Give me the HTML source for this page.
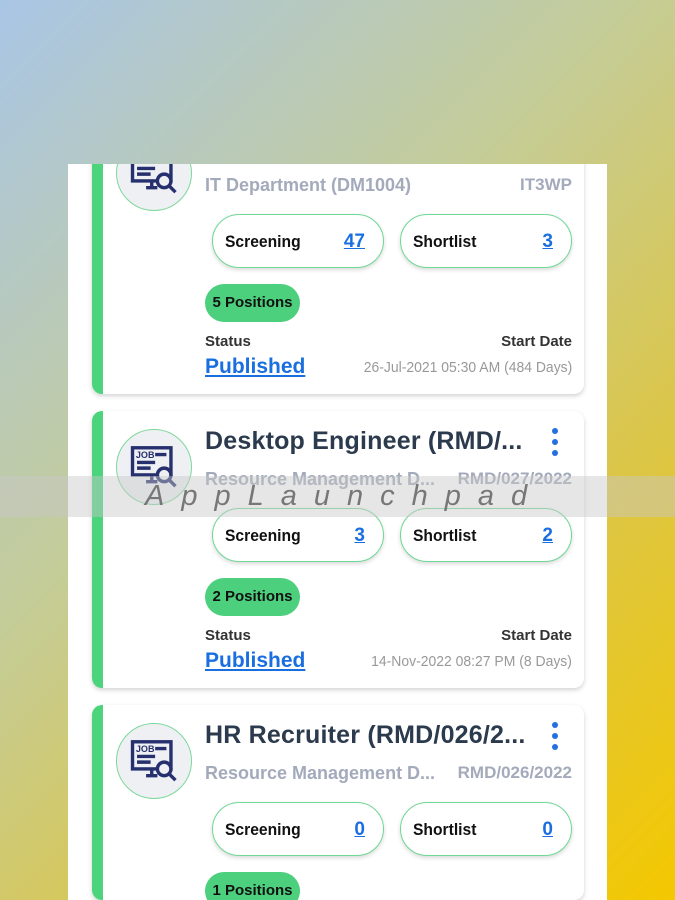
<!DOCTYPE html>
<html><head><meta charset="utf-8"><style>
*{margin:0;padding:0;box-sizing:border-box}
html,body{width:675px;height:900px;overflow:hidden}
body{position:relative;font-family:"Liberation Sans",sans-serif;
background:linear-gradient(135deg,#a9c6e6 0%,#c4cc98 40%,#dcc646 70%,#f4c800 100%);}
.panel{position:absolute;left:68px;top:164px;width:539px;height:736px;background:#fff;overflow:hidden}
.card{position:absolute;left:24px;width:492px;height:277px;background:#fff;border-radius:10px;box-shadow:0 2px 5px rgba(0,0,0,.18);overflow:hidden}
.bar{position:absolute;left:0;top:0;bottom:0;width:11px;background:#4cd47c}
.ic{position:absolute;left:24px;top:18px;width:76px;height:76px;border-radius:50%;background:#eef0f4;border:1.5px solid #7cd89a}
.ic svg{position:absolute;left:11px;top:11px}
.title{position:absolute;left:113px;top:16px;font-size:25px;font-weight:bold;color:#2c3a4e;white-space:nowrap;letter-spacing:.2px}
.dots{position:absolute;left:460px;top:17px;width:8px}
.dots i{display:block;width:6px;height:6px;border-radius:50%;background:#2470e0;margin-bottom:5px}
.sub{position:absolute;left:113px;top:58px;font-size:18px;font-weight:bold;color:#a3aabb}
.code{position:absolute;right:12px;top:58px;font-size:17px;font-weight:bold;color:#a3aabb}
.pill{position:absolute;top:97px;width:172px;height:54px;border:1.5px solid #6fd894;border-radius:27px;box-shadow:0 2px 4px rgba(0,0,0,.15);background:#fff}
.pill span{position:absolute;left:12px;top:17px;font-size:17px;font-weight:bold;color:#111;transform:scaleX(.92);transform-origin:left}
.pill b{position:absolute;right:18px;top:16px;font-size:19px;color:#1a6fe0;text-decoration:underline}
.badge{position:absolute;left:113px;top:167px;width:95px;height:38px;border-radius:19px;background:#4cd07d;font-size:15px;font-weight:bold;color:#111;text-align:center;line-height:38px}
.st{position:absolute;left:113px;top:216px;font-size:15px;font-weight:bold;color:#333}
.sd{position:absolute;right:12px;top:216px;font-size:15px;font-weight:bold;color:#333}
.pub{position:absolute;left:113px;top:238px;font-size:21px;font-weight:bold;color:#1a6fe0;text-decoration:underline}
.date{position:absolute;right:12px;top:242px;font-size:15px;color:#999;transform:scaleX(.93);transform-origin:right}
.wm{position:absolute;left:0;top:476px;width:675px;height:41px;background:rgba(200,200,200,.45);font-size:29px;font-style:italic;color:#777;letter-spacing:17px;line-height:41px;padding-left:145px;white-space:nowrap}
</style></head><body>
<div class="panel">
<div class="card" style="top:-47px">
<div class="bar"></div>
<div class="ic"><svg width="52" height="52" viewBox="0 0 46 46" fill="none" stroke="#27306e" stroke-width="3"><rect x="4" y="6" width="34" height="24"/><text x="7" y="15" font-size="8" font-weight="bold" fill="#27306e" stroke="none" font-family="Liberation Sans">JOB</text><path d="M24 12h10M8 19h16M8 24h12M16 36h10M21 30v6"/><circle cx="32" cy="30" r="6" fill="#eef0f4"/><path d="M36 34l6 6"/></svg></div>
<div class="title">Network Support Engi...</div>
<div class="dots"><i></i><i></i><i></i></div>
<div class="sub">IT Department (DM1004)</div><div class="code">IT3WP</div>
<div class="pill" style="left:120px"><span>Screening</span><b>47</b></div>
<div class="pill" style="left:308px"><span>Shortlist</span><b>3</b></div>
<div class="badge">5 Positions</div>
<div class="st">Status</div><div class="sd">Start Date</div>
<div class="pub">Published</div><div class="date">26-Jul-2021 05:30 AM (484 Days)</div>
</div>
<div class="card" style="top:247px">
<div class="bar"></div>
<div class="ic"><svg width="52" height="52" viewBox="0 0 46 46" fill="none" stroke="#27306e" stroke-width="3"><rect x="4" y="6" width="34" height="24"/><text x="7" y="15" font-size="8" font-weight="bold" fill="#27306e" stroke="none" font-family="Liberation Sans">JOB</text><path d="M24 12h10M8 19h16M8 24h12M16 36h10M21 30v6"/><circle cx="32" cy="30" r="6" fill="#eef0f4"/><path d="M36 34l6 6"/></svg></div>
<div class="title">Desktop Engineer (RMD/...</div>
<div class="dots"><i></i><i></i><i></i></div>
<div class="sub">Resource Management D...</div><div class="code">RMD/027/2022</div>
<div class="pill" style="left:120px"><span>Screening</span><b>3</b></div>
<div class="pill" style="left:308px"><span>Shortlist</span><b>2</b></div>
<div class="badge">2 Positions</div>
<div class="st">Status</div><div class="sd">Start Date</div>
<div class="pub">Published</div><div class="date">14-Nov-2022 08:27 PM (8 Days)</div>
</div>
<div class="card" style="top:541px;height:195px">
<div class="bar"></div>
<div class="ic"><svg width="52" height="52" viewBox="0 0 46 46" fill="none" stroke="#27306e" stroke-width="3"><rect x="4" y="6" width="34" height="24"/><text x="7" y="15" font-size="8" font-weight="bold" fill="#27306e" stroke="none" font-family="Liberation Sans">JOB</text><path d="M24 12h10M8 19h16M8 24h12M16 36h10M21 30v6"/><circle cx="32" cy="30" r="6" fill="#eef0f4"/><path d="M36 34l6 6"/></svg></div>
<div class="title">HR Recruiter (RMD/026/2...</div>
<div class="dots"><i></i><i></i><i></i></div>
<div class="sub">Resource Management D...</div><div class="code">RMD/026/2022</div>
<div class="pill" style="left:120px"><span>Screening</span><b>0</b></div>
<div class="pill" style="left:308px"><span>Shortlist</span><b>0</b></div>
<div class="badge">1 Positions</div>
</div>
</div>
<div class="wm">AppLaunchpad</div>
</body></html>
